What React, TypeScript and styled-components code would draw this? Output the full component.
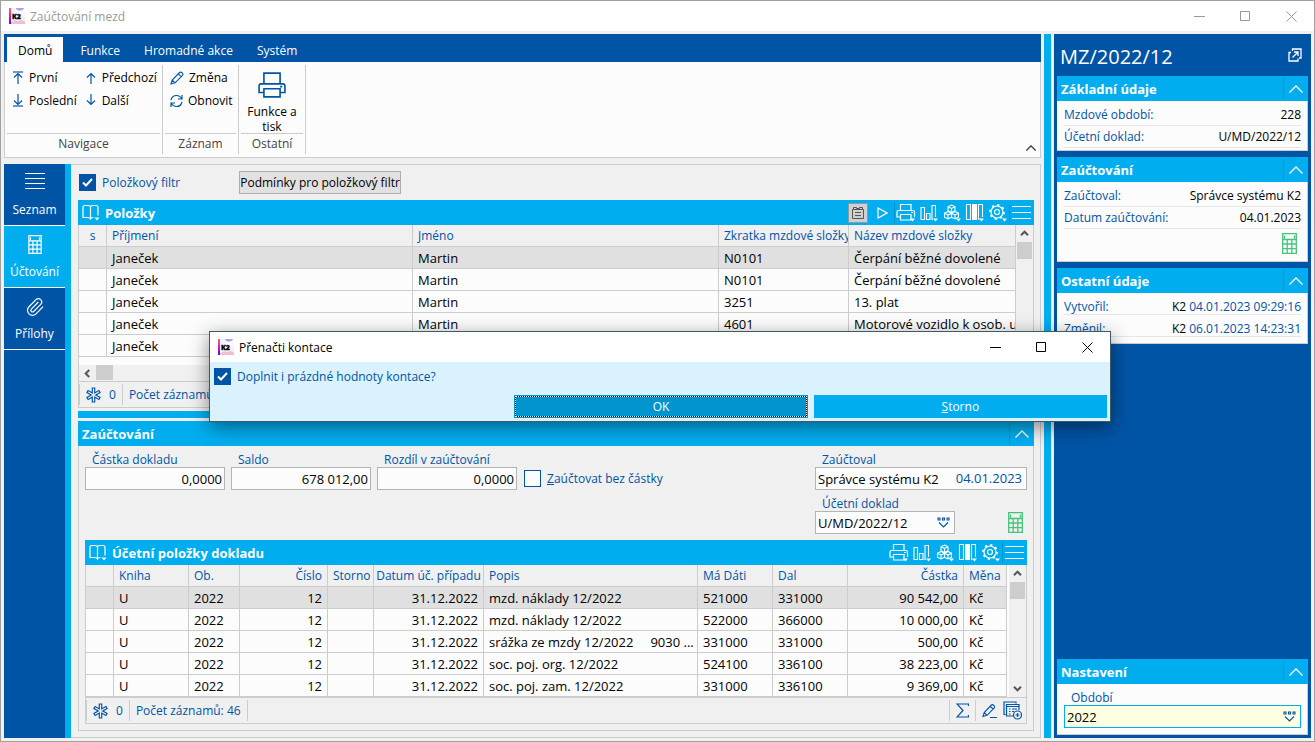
import React, { useState } from "react";
import styled, { createGlobalStyle, css } from "styled-components";

const c = {
  blue: "#0054a6",
  cyan: "#00aeef",
  cyanDark: "#0095cc",
  face: "#f0f0f0",
  paper: "#fcfcfc",
  line: "#cccccc",
  soft: "#d9f2fe",
  green: "#46c37b",
};

const Global = createGlobalStyle`
  *, *::before, *::after { box-sizing: border-box; }
  html, body { margin: 0; }
  body, button, input, select, table {
    font-family: "Open Sans", "Noto Sans", sans-serif;
    font-size: 12px;
    line-height: 15px;
  }
  body { background: ${c.face}; color: #000; }
  button { border: 0; padding: 0; background: none; color: inherit; cursor: default; }
`;

/* ---------- icons ---------- */

const Svg = styled.svg`
  display: block;
  flex: none;
  fill: none;
  stroke: currentColor;
`;

type Size = { w?: number; h?: number };

const Logo = () => (
  <Svg width="16" height="16" viewBox="0 0 16 16" stroke="none" aria-hidden="true">
    <defs>
      <linearGradient id="bar" x1="0" y1="0" x2="0" y2="1">
        <stop offset="0" stopColor="#ff6a5a" />
        <stop offset="0.5" stopColor="#d61ad0" />
        <stop offset="1" stopColor="#4a12e8" />
      </linearGradient>
      <linearGradient id="sky" x1="0" y1="0" x2="1" y2="1">
        <stop offset="0" stopColor="#f3e6fb" />
        <stop offset="0.5" stopColor="#ffffff" />
        <stop offset="1" stopColor="#f4dff0" />
      </linearGradient>
    </defs>
    <rect width="16" height="16" fill="url(#sky)" stroke="none" />
    <path d="M7 0h8l-1 2-4 .8L7 1z" fill="#8d7be8" stroke="none" opacity="0.7" />
    <path d="M2 14l4-2 3 1 4-1 3 2v2H2z" fill="#f0a8c0" stroke="none" opacity="0.7" />
    <rect width="2" height="16" fill="url(#bar)" stroke="none" />
    <text x="3" y="11" fontSize="7" fontWeight="800" fill="#000" stroke="#000" strokeWidth="0.3" fontFamily="Open Sans, sans-serif">K2</text>
  </Svg>
);

const Check = () => (
  <Svg width="11" height="9" viewBox="0 0 11 9" strokeWidth="2" aria-hidden="true">
    <path d="M1 4.5l3 3 6-6.5" />
  </Svg>
);

const ArrowIcon = ({ down, bar }: { down?: boolean; bar?: boolean }) => (
  <Svg width="12" height="13" viewBox="0 0 12 13" strokeWidth="1.2" aria-hidden="true">
    <g transform={down ? "rotate(180 6 6.5)" : undefined}>
      <path d="M6 13V2.5M2 6.5l4-4 4 4" />
      {bar && <path d="M1 1h10" />}
    </g>
  </Svg>
);

const Pencil = () => (
  <Svg width="14" height="14" viewBox="0 0 14 14" strokeWidth="1.1" aria-hidden="true">
    <path d="M1 13l1.200-4L9.600 1.500q1.100-.9 2.500.4t.4 2.500L5 11.800zM8.300 2.800l2.900 2.900M2.200 9l2.800 2.800" />
  </Svg>
);

const Refresh = () => (
  <Svg width="13" height="14" viewBox="0 0 13 14" strokeWidth="1.2" aria-hidden="true">
    <path d="M1 6Q2 1.500 6.500 1.500 10 1.500 11.800 5M12 1v4H8M12 8Q11 12.500 6.500 12.500 3 12.500 1.200 9M1 13V9h4" />
  </Svg>
);

const Printer = ({ w = 28, h = 26 }: Size) => (
  <Svg width={w} height={h} viewBox="0 0 26 24" strokeWidth="1.5" aria-hidden="true">
    <path d="M5.500 11V1h15v10M5.500 19H1V13q0-2 2-2h20q2 0 2 2v6h-4.500M5.500 15.500h15V23h-15zM20.500 13.500h2" />
  </Svg>
);

const Chevron = ({ w = 14, h = 8, weight = 1.3 }: Size & { weight?: number }) => (
  <Svg width={w} height={h} viewBox="0 0 14 8" strokeWidth={weight} aria-hidden="true">
    <path d="M0.500 7.500L7 1l6.500 6.500" />
  </Svg>
);

const Lines = () => (
  <Svg width="20" height="17" viewBox="0 0 20 17" aria-hidden="true">
    <path d="M0 .5h20M0 5.500h20M0 10.500h20M0 15.500h20" />
  </Svg>
);

const Calc = ({ w = 15, h = 21 }: Size) => (
  <Svg width={w} height={h} viewBox="0 0 15 21" strokeWidth="1.3" aria-hidden="true">
    <path d="M.7.7h13.600v19.600H.7zM2.500 2.500v3M12.500 2.500v3M.7 6.500h13.600M.7 11h13.600M.7 15.600h13.600M5.200 6.500v14M9.800 6.500v14" />
  </Svg>
);

const Clip = () => (
  <Svg width="20" height="20" viewBox="0 0 24 24" strokeWidth="1.4" aria-hidden="true">
    <path d="m16 6-8.414 8.586a2 2 0 0 0 2.829 2.829l8.414-8.586a4 4 0 1 0-5.657-5.657l-8.379 8.551a6 6 0 1 0 8.485 8.485l8.379-8.551" />
  </Svg>
);

const Book = () => (
  <Svg width="18" height="17" viewBox="0 0 18 17" strokeWidth="1.2" aria-hidden="true">
    <path d="M8.500 2.500Q7.500 1.500 5.500 1.500H3Q1 1.500 1 3.500V13.500H5.500q2 0 3 1.500Q9.500 13.500 11.500 13.500M8.500 2.500Q9.500 1.500 11.500 1.500H14q2 0 2 2V11.500M8.500 2.500v12.500" />
    <path d="M12.500 13.500h5L15 16.500z" fill="currentColor" stroke="none" />
  </Svg>
);

const BoxIcon = () => (
  <Svg width="12" height="13" viewBox="0 0 12 13" aria-hidden="true">
    <path d="M.5 3.500v9h11v-9zM1.500 3.500v-2h3v1h3v-1h3v2" />
    <path d="M3 6.500h6M3 9.500h6" />
  </Svg>
);

const Play = () => (
  <Svg width="11" height="12" viewBox="0 0 11 12" strokeWidth="1.2" aria-hidden="true">
    <path d="M1 1l9 5-9 5z" />
  </Svg>
);

const Drop = () => <path d="M14 15.500h5l-2.500 3z" fill="currentColor" stroke="none" />;

const PrintTool = () => (
  <Svg width="20" height="19" viewBox="0 0 20 19" strokeWidth="1.2" aria-hidden="true">
    <path d="M4.500 7.500v-6h10.500v6M4.500 14H1V9q0-1.500 1.500-1.500h14.500q1.500 0 1.500 1.500v5M4.500 11.500H15v5.500H4.500zM15 9.500h2" />
    <Drop />
  </Svg>
);

const ChartTool = () => (
  <Svg width="20" height="19" viewBox="0 0 20 19" strokeWidth="1.1" aria-hidden="true">
    <path d="M2 4.500h3.500v12H2zM7.500 10.500H11v6H7.500zM16.500 14V2.500H13v14h1" />
    <Drop />
  </Svg>
);

const CubesTool = () => (
  <Svg width="20" height="19" viewBox="0 0 20 19" strokeWidth="1.1" aria-hidden="true">
    <path d="M9.500 2l3.500 1.800v4L9.500 9.500 6 7.800v-4zM6 3.800l3.500 1.700L13 3.800M9.500 5.500v4M6 8.500l3.500 1.700v4L6 16l-3.500-1.800v-4zM2.500 10.200L6 12l3.500-1.800L13 8.500l3.500 1.700v4L13 16l-3.500-1.800M6 12v4M9.500 10.200L13 12l3.500-1.800M13 12v4" />
    <Drop />
  </Svg>
);

const ColumnsTool = () => (
  <Svg width="20" height="19" viewBox="0 0 20 19" strokeWidth="1.1" aria-hidden="true">
    <path d="M1.500 1.500h4v15h-4zM13.500 16.500v-15h4v12.500M13.500 16.500h1" />
    <path d="M7 1h5v16H7z" fill="currentColor" stroke="none" />
    <Drop />
  </Svg>
);

const GearTool = () => (
  <Svg width="20" height="19" viewBox="0 0 20 19" strokeWidth="1.200" aria-hidden="true">
    <circle cx="9" cy="9" r="6" />
    <circle cx="9" cy="9" r="2.500" />
    <circle cx="9" cy="9" r="7" strokeWidth="1.800" strokeDasharray="2.200 3.298" />
    <Drop />
  </Svg>
);

const MenuTool = () => (
  <Svg width="19" height="13" viewBox="0 0 19 13" aria-hidden="true">
    <path d="M0 .5h19M0 6.500h19M0 12.500h19" />
  </Svg>
);

const Asterisk = () => (
  <Svg width="15" height="16" viewBox="0 0 15 16" aria-hidden="true">
    <path d="M7.500 .5v15M1 4.200l13 7.600M14 4.200L1 11.800" strokeWidth="3.600" />
    <path d="M7.500 1.500v13M2 4.800l11 6.400M13 4.800L2 11.200" strokeWidth="1.300" stroke={c.face} />
  </Svg>
);

const Sigma = () => (
  <Svg width="13" height="15" viewBox="0 0 13 15" strokeWidth="1.200" aria-hidden="true">
    <path d="M12.500 3V1H1l6 6.500L1 14h11.500v-2" />
  </Svg>
);

const EditLine = () => (
  <Svg width="15" height="16" viewBox="0 0 15 16" strokeWidth="1.100" aria-hidden="true">
    <path d="M1 13.500l1.200-4L9.400 2q1.100-.9 2.500.4t.4 2.500L5 12.300zM8.200 3.200l2.900 2.900M2.200 9.500L5 12.300M8 14.500h7" />
  </Svg>
);

const ListAdd = () => (
  <Svg width="19" height="19" viewBox="0 0 19 19" strokeWidth="1.200" aria-hidden="true">
    <path d="M2.500 13.500H1V1h12v1.500M10 15H3.500V3.500H16V9M3.500 5.500H16M6 8h1.500M9 8h5M6 10.500h1.500M9 10.500h2M6 13h1.500" />
    <circle cx="14.500" cy="14" r="4" />
    <path d="M12.500 14h4M14.500 12v4" />
  </Svg>
);

const Picker = () => (
  <Svg width="13" height="11" viewBox="0 0 13 11" strokeWidth="1.100" aria-hidden="true">
    <path d="M1 1h2v2H1zM5.500 1h2v2h-2zM10 1h2v2h-2zM2 5.500l4.500 4.500L11 5.500" />
  </Svg>
);

const External = () => (
  <Svg width="14" height="14" viewBox="0 0 14 14" strokeWidth="1.300" aria-hidden="true">
    <path d="M4.500 3V1H13v9h-2M3 4.500H1V13h9v-2.500M4.500 9.500L10 4M6 4h4v4" />
  </Svg>
);

const ScrollArrow = ({ turn = 0 }: { turn?: number }) => (
  <Svg width="9" height="9" viewBox="0 0 9 9" strokeWidth="2" aria-hidden="true">
    <path d="M1 6.200l3.500-3.500L8 6.200" transform={`rotate(${turn} 4.500 4.500)`} />
  </Svg>
);

const WinGlyph = ({ kind }: { kind: "min" | "max" | "close" }) => (
  <Svg width="11" height="11" viewBox="0 0 11 11" aria-hidden="true">
    {kind === "min" && <path d="M0 5.500h11" />}
    {kind === "max" && <path d="M.5.5h9v9h-9z" />}
    {kind === "close" && <path d="M.5.5l10 10M10.500.5l-10 10" />}
  </Svg>
);

/* ---------- window frame ---------- */

const Window = styled.div`
  position: relative;
  display: flex;
  flex-direction: column;
  min-height: 100vh;
  border: 1px solid #a0a0a0;
  background: ${c.face};
`;

const TitleBar = styled.header<{ $active?: boolean }>`
  display: flex;
  align-items: center;
  gap: 5px;
  height: 30px;
  padding-left: 8px;
  background: #fff;
  color: ${(p) => (p.$active ? "#000" : "#999")};
`;

const TitleText = styled.h1`
  flex: 1;
  margin: 0;
  font-size: 12px;
  font-weight: 400;
`;

const WinButtons = styled.div`
  display: flex;
  align-self: stretch;
`;

const WinButton = styled.button`
  display: grid;
  place-items: center;
  width: 46px;
`;

const Body = styled.div`
  flex: 1;
  display: grid;
  grid-template-columns: minmax(0, 1fr) 7px 257px;
  gap: 3px;
  padding: 3px;
`;

const VSplitter = styled.div`
  background: ${c.cyan};
`;

const Left = styled.div`
  display: flex;
  flex-direction: column;
  min-width: 0;
`;

/* ---------- ribbon ---------- */

const Tabs = styled.nav`
  display: flex;
  height: 28px;
  padding: 3px 3px 0;
  background: ${c.blue};
`;

const Tab = styled.button<{ $active?: boolean }>`
  padding: 1px ${(p) => (p.$active ? 11 : 12)}px 0;
  margin-right: ${(p) => (p.$active ? 5 : 0)}px;
  color: ${(p) => (p.$active ? "#000" : "#fff")};
  background: ${(p) => (p.$active ? c.paper : "transparent")};
`;

const Ribbon = styled.section`
  display: flex;
  height: 96px;
  padding: 3px 3px 3px 2px;
  margin-bottom: 6px;
  background: ${c.paper};
  border: 1px solid ${c.line};
  border-width: 0 1px 1px 1px;
`;

const Group = styled.div<{ $width: number }>`
  display: flex;
  flex-direction: column;
  width: ${(p) => p.$width}px;
  padding-right: 2px;
  margin-right: 2px;
  border-right: 1px solid ${c.line};
`;

const GroupBody = styled.div`
  flex: 1;
  display: grid;
  grid-auto-flow: column;
  grid-template-rows: 23px 23px;
  justify-content: start;
  column-gap: 8px;
  padding: 1px 5px 0;
  border-bottom: 1px solid ${c.line};
`;

const GroupLabel = styled.div`
  height: 20px;
  line-height: 20px;
  text-align: center;
  color: #444;
`;

const Command = styled.button`
  display: flex;
  align-items: center;
  gap: 5px;
  svg { color: ${c.blue}; }
`;

const BigCommand = styled.button`
  grid-row: 1 / 3;
  display: flex;
  flex-direction: column;
  align-items: center;
  gap: 6px;
  width: 52px;
  height: 68px;
  padding-top: 6px;
  svg { color: ${c.blue}; }
`;

const Collapse = styled.button`
  margin-left: auto;
  align-self: flex-end;
  padding: 3px 1px;
  color: #333;
`;

/* ---------- work area ---------- */

const Work = styled.div`
  flex: 1;
  display: flex;
  min-width: 0;
`;

const Side = styled.nav`
  flex: none;
  width: 67px;
  background: ${c.blue};
  border-right: 6px solid ${c.cyan};
`;

const SideItem = styled.button<{ $active?: boolean }>`
  display: flex;
  flex-direction: column;
  align-items: center;
  justify-content: space-between;
  width: 100%;
  height: 62px;
  padding: 9px 0 8px;
  color: #fff;
  background: ${(p) => (p.$active ? c.cyan : c.blue)};
  border-bottom: 1px solid #fff;
`;

const Main = styled.main`
  flex: 1;
  display: flex;
  flex-direction: column;
  min-width: 0;
  padding: 6px 6px 6px 7px;
  border: 1px solid ${c.line};
  border-left: 0;
`;

const FilterRow = styled.div`
  display: flex;
  align-items: center;
  gap: 59px;
  height: 23px;
  padding-left: 1px;
  margin-bottom: 6px;
`;

const TickLabel = styled.label`
  display: inline-flex;
  align-items: center;
  gap: 6px;
  color: ${c.blue};
`;

const TickBox = styled.span`
  display: grid;
  width: 17px;
  height: 17px;
  color: #fff;
  > * { grid-area: 1 / 1; place-self: center; }
  > svg { z-index: 1; pointer-events: none; }
`;

const TickInput = styled.input`
  appearance: none;
  width: 17px;
  height: 17px;
  margin: 0;
  border: 1px solid ${c.blue};
  background: ${c.paper};
  &:checked { background: ${c.blue}; }
`;

const PlainButton = styled.button`
  height: 23px;
  white-space: nowrap;
  background: #e1e1e1;
  border: 1px solid #adadad;
`;

const Bar = styled.div<{ $fold?: boolean }>`
  display: flex;
  align-items: center;
  height: 25px;
  padding: 0 ${(p) => (p.$fold ? 0 : 2)}px 0 4px;
  gap: 5px;
  background: ${c.cyan};
  color: #fff;
`;

const BarTitle = styled.h2`
  flex: 1;
  margin: 0;
  padding-top: 1px;
  font-size: 13px;
  font-weight: 700;
`;

const Tools = styled.div`
  display: flex;
  align-items: center;
`;

const Tool = styled.button<{ $sep?: boolean; $pressed?: boolean }>`
  display: grid;
  place-items: center;
  width: 23px;
  height: 21px;
  ${(p) => p.$sep && css`border-left: 1px solid ${c.cyanDark};`}
  ${(p) =>
    p.$pressed &&
    css`
      width: 20px;
      height: 20px;
      margin-right: 3px;
      background: #d0d0d0;
      border: 1px solid #8c9ba3;
      color: #555;
    `}
`;

const CollapseTool = styled.button`
  display: grid;
  place-items: center;
  width: 25px;
  height: 21px;
  border-left: 1px solid ${c.cyanDark};
`;

const GridArea = styled.div`
  display: flex;
  background: ${c.paper};
  border: 1px solid ${c.line};
  border-width: 0 1px;
`;

const GridClip = styled.div`
  flex: 1;
  min-width: 0;
  overflow: hidden;
`;

const GridFoot = styled.div`
  height: 8px;
  background: ${c.paper};
  border: 1px solid ${c.line};
  border-width: 0 1px;
`;

const Gutter = styled.div`
  width: 2px;
`;

const Table = styled.table`
  width: 100%;
  table-layout: fixed;
  border-collapse: separate;
  border-spacing: 0;
`;

type CellProps = { $align?: "right" | "center" };

const cell = css<CellProps>`
  height: 22px;
  overflow: hidden;
  white-space: nowrap;
  text-align: ${(p) => p.$align ?? "left"};
  border-right: 1px solid ${c.line};
  border-bottom: 1px solid ${c.line};
`;

const thPadding = { right: "0 5px 0 0", center: "0", left: "0 0 0 5px" };

const Th = styled.th<CellProps>`
  ${cell}
  padding: ${(p) => thPadding[p.$align ?? "left"]};
  font-size: 12px;
  font-weight: 400;
  color: ${c.blue};
  background: ${c.face};
`;

const Td = styled.td<CellProps>`
  ${cell}
  padding: 2px 5px 0;
  font-size: 13px;
`;

const Tr = styled.tr<{ $selected?: boolean }>`
  background: ${(p) => (p.$selected ? "#e0e0e0" : c.paper)};
`;

const Tail = styled.span`
  margin-left: 17px;
`;

const VScroll = styled.div`
  display: flex;
  flex-direction: column;
  align-items: center;
  width: 17px;
  background: ${c.face};
  color: #555;
`;

const HScroll = styled.div`
  display: flex;
  height: 16px;
  background: ${c.face};
  border: 1px solid ${c.line};
  border-width: 0 1px;
  color: #555;
`;

const ScrollButton = styled.button`
  display: grid;
  place-items: center;
  width: 17px;
  height: 17px;
`;

const Thumb = styled.div<{ $flat?: boolean }>`
  width: ${(p) => (p.$flat ? 17 : 15)}px;
  height: ${(p) => (p.$flat ? 15 : 17)}px;
  background: #cdcdcd;
`;

const Spacer = styled.div`
  flex: 1;
`;

const Status = styled.div`
  display: flex;
  align-items: center;
  height: 27px;
  border: 1px solid ${c.line};
  color: ${c.blue};
`;

const StatusItem = styled.div<{ $left?: boolean; $right?: boolean; $end?: boolean }>`
  display: flex;
  align-items: center;
  gap: ${(p) => (p.$end ? 6 : 8)}px;
  height: 21px;
  padding: 0 ${(p) => (p.$end ? 4 : 6)}px 0 6px;
  border: 0 solid ${c.line};
  border-left-width: ${(p) => (p.$left ? 1 : 0)}px;
  border-right-width: ${(p) => (p.$right ? 1 : 0)}px;
`;

const IconButton = styled.button`
  display: grid;
  place-items: center;
`;

const HSplitter = styled.div`
  height: 7px;
  margin: 3px 0;
  background: ${c.cyan};
`;

const Posting = styled.section`
  flex: 1;
  padding: 0 6px 6px;
  border: 1px solid ${c.line};
  border-top: 0;
`;

const Form = styled.div`
  display: flex;
  align-items: flex-start;
  gap: 6px;
  padding: 6px 0;
`;

const FormSide = styled.div`
  display: grid;
  grid-template-columns: 140px 72px;
  row-gap: 6px;
  margin-left: auto;
`;

const FieldBox = styled.div<{ $wide?: boolean }>`
  display: flex;
  flex-direction: column;
  width: ${(p) => (p.$wide ? "auto" : "140px")};
  ${(p) => p.$wide && css`grid-column: 1 / 3;`}
`;

const FieldLabel = styled.label`
  padding-left: 7px;
  height: 15px;
  color: ${c.blue};
`;

const fieldLook = css`
  height: 23px;
  background: ${c.paper};
  border: 1px solid #b4b4b4;
  font-size: 13px;
`;

const NumberInput = styled.input`
  ${fieldLook}
  width: 100%;
  padding: 1px 2px 0;
  text-align: right;
`;

const Combo = styled.div<{ $focus?: boolean }>`
  ${fieldLook}
  display: flex;
  align-items: center;
  padding: 0 4px 0 2px;
  color: ${c.blue};
  ${(p) =>
    p.$focus &&
    css`
      background: #ffffe1;
      border-color: ${c.cyan};
    `}
`;

const bare = css`
  flex: 1;
  min-width: 0;
  height: 21px;
  padding: 1px 0 0;
  border: 0;
  outline: 0;
  background: transparent;
  font-size: 13px;
  color: #000;
`;

const BareInput = styled.input`
  ${bare}
`;

const BareSelect = styled.select`
  ${bare}
  appearance: none;
`;

const TickHolder = styled.div`
  padding: 18px 0 0 1px;
`;

const GreenButton = styled.button`
  align-self: end;
  justify-self: end;
  padding: 0 4px 1px 0;
  color: ${c.green};
`;

/* ---------- right panel ---------- */

const Aside = styled.aside`
  display: flex;
  flex-direction: column;
  gap: 6px;
  padding: 0 3px 3px;
  background: ${c.blue};
`;

const AsideTitle = styled.div`
  display: flex;
  align-items: center;
  justify-content: space-between;
  height: 42px;
  margin-bottom: -6px;
  padding: 3px 6px 0 3px;
  font-size: 20px;
  color: #fff;
  svg { margin-bottom: 3px; }
`;

const Card = styled.section<{ $bottom?: boolean }>`
  ${(p) => p.$bottom && css`margin-top: auto;`}
`;

const CardBody = styled.div<{ $pad?: string }>`
  padding: ${(p) => p.$pad ?? "3px 6px 2px 7px"};
  background: ${c.paper};
  border: 1px solid ${c.line};
  border-width: 0 1px 1px 0;
`;

const Info = styled.div<{ $low?: boolean }>`
  display: flex;
  align-items: center;
  justify-content: space-between;
  height: 22px;
  padding-top: ${(p) => (p.$low ? 5 : 0)}px;
  color: ${c.blue};
  border-bottom: 1px solid #e6e6e6;
  b { font-weight: 400; color: #000; }
`;

const CardIcon = styled.div`
  display: flex;
  justify-content: flex-end;
  padding: 4px 0;
`;

/* ---------- dialog ---------- */

const Dialog = styled.div`
  position: absolute;
  top: 330px;
  left: 208px;
  right: 203px;
  border: 1px solid #3c5a68;
  background: ${c.soft};
  box-shadow: 0 5px 18px rgba(0, 0, 0, 0.45);
`;

const DialogBody = styled.div`
  display: flex;
  padding: 6px 4px 0;
`;

const DialogButtons = styled.div`
  display: grid;
  grid-template-columns: 1fr 1fr 1fr;
  gap: 6px;
  padding: 10px 3px 3px 5px;
`;

const DialogButton = styled.button<{ $default?: boolean }>`
  height: 23px;
  color: #fff;
  background: ${c.cyan};
  &:first-child { grid-column: 2; }
  ${(p) =>
    p.$default &&
    css`
      background: #0095cc;
      outline: 1px dotted #fff;
      outline-offset: -2px;
      box-shadow: inset 0 0 0 1px #0095cc, inset 0 0 0 2px #000;
    `}
`;

/* ---------- pieces ---------- */

const Tick = ({ id, on, children }: { id: string; on?: boolean; children: React.ReactNode }) => {
  const [checked, setChecked] = useState(!!on);
  return (
    <TickLabel htmlFor={id}>
      <TickBox>
        <TickInput id={id} type="checkbox" checked={checked} onChange={(e) => setChecked(e.target.checked)} />
        {checked && <Check />}
      </TickBox>
      <span>{children}</span>
    </TickLabel>
  );
};

const Controls = () => (
  <WinButtons>
    <WinButton aria-label="Minimalizovat"><WinGlyph kind="min" /></WinButton>
    <WinButton aria-label="Maximalizovat"><WinGlyph kind="max" /></WinButton>
    <WinButton aria-label="Zavřít"><WinGlyph kind="close" /></WinButton>
  </WinButtons>
);

const GridTools = ({ extra }: { extra?: boolean }) => (
  <Tools>
    {extra && <Tool $pressed aria-label="Karta"><BoxIcon /></Tool>}
    {extra && <Tool aria-label="Spustit"><Play /></Tool>}
    <Tool $sep={extra} aria-label="Tisk"><PrintTool /></Tool>
    <Tool aria-label="Graf"><ChartTool /></Tool>
    <Tool aria-label="Kostky"><CubesTool /></Tool>
    <Tool aria-label="Sloupce"><ColumnsTool /></Tool>
    <Tool aria-label="Možnosti"><GearTool /></Tool>
    <Tool $sep aria-label="Nabídka"><MenuTool /></Tool>
  </Tools>
);

const FoldBar = ({ title }: { title: string }) => (
  <Bar $fold>
    <BarTitle>{title}</BarTitle>
    <CollapseTool aria-label={`Sbalit ${title}`}><Chevron /></CollapseTool>
  </Bar>
);

const people = [
  ["N0101", "Čerpání běžné dovolené"],
  ["N0101", "Čerpání běžné dovolené"],
  ["3251", "13. plat"],
  ["4601", "Motorové vozidlo k osob. užívání"],
  ["4601", "Motorové vozidlo k osob. užívání"],
];

const entries = [
  ["mzd. náklady 12/2022", "", "521000", "331000", "90 542,00"],
  ["mzd. náklady 12/2022", "", "522000", "366000", "10 000,00"],
  ["srážka ze mzdy 12/2022", "9030 ...", "331000", "331000", "500,00"],
  ["soc. poj. org. 12/2022", "", "524100", "336100", "38 223,00"],
  ["soc. poj. zam. 12/2022", "", "331000", "336100", "9 369,00"],
];

const Cols = ({ list }: { list: (number | null)[] }) => (
  <colgroup>
    {list.map((w, i) => (w ? <col key={i} width={w} /> : <col key={i} />))}
  </colgroup>
);

const ItemsGrid = () => (
  <section>
    <Bar>
      <Book />
      <BarTitle>Položky</BarTitle>
      <GridTools extra />
    </Bar>
    <GridArea>
      <GridClip>
        <Table>
          <Cols list={[28, 306, 306, 130, null]} />
          <thead>
            <tr>
              <Th $align="center">s</Th>
              <Th>Příjmení</Th>
              <Th>Jméno</Th>
              <Th>Zkratka mzdové složky</Th>
              <Th>Název mzdové složky</Th>
            </tr>
          </thead>
          <tbody>
            {people.map(([code, name], i) => (
              <Tr key={i} $selected={i === 0}>
                <Td />
                <Td>Janeček</Td>
                <Td>Martin</Td>
                <Td>{code}</Td>
                <Td>{name}</Td>
              </Tr>
            ))}
          </tbody>
        </Table>
      </GridClip>
      <VScroll>
        <ScrollButton aria-label="Nahoru"><ScrollArrow /></ScrollButton>
        <Thumb />
      </VScroll>
    </GridArea>
    <GridFoot />
    <HScroll>
      <ScrollButton aria-label="Doleva"><ScrollArrow turn={-90} /></ScrollButton>
      <Thumb $flat />
    </HScroll>
    <Status>
      <StatusItem $left $right><Asterisk />0</StatusItem>
      <StatusItem>Počet záznamů: 46</StatusItem>
    </Status>
  </section>
);

const EntriesGrid = () => (
  <section>
    <Bar>
      <Book />
      <BarTitle>Účetní položky dokladu</BarTitle>
      <GridTools />
    </Bar>
    <GridArea>
      <GridClip>
        <Table>
          <Cols list={[28, 75, 51, 88, 46, 110, null, 75, 75, 116, 43]} />
          <thead>
            <tr>
              <Th />
              <Th>Kniha</Th>
              <Th>Ob.</Th>
              <Th $align="right">Číslo</Th>
              <Th>Storno</Th>
              <Th $align="center">Datum úč. případu</Th>
              <Th>Popis</Th>
              <Th>Má Dáti</Th>
              <Th>Dal</Th>
              <Th $align="right">Částka</Th>
              <Th>Měna</Th>
            </tr>
          </thead>
          <tbody>
            {entries.map(([text, tail, debit, credit, sum], i) => (
              <Tr key={i} $selected={i === 0}>
                <Td />
                <Td>U</Td>
                <Td>2022</Td>
                <Td $align="right">12</Td>
                <Td />
                <Td $align="right">31.12.2022</Td>
                <Td>{text}{tail && <Tail>{tail}</Tail>}</Td>
                <Td>{debit}</Td>
                <Td>{credit}</Td>
                <Td $align="right">{sum}</Td>
                <Td>Kč</Td>
              </Tr>
            ))}
          </tbody>
        </Table>
      </GridClip>
      <Gutter />
      <VScroll>
        <ScrollButton aria-label="Nahoru"><ScrollArrow /></ScrollButton>
        <Thumb />
        <Spacer />
        <ScrollButton aria-label="Dolů"><ScrollArrow turn={180} /></ScrollButton>
      </VScroll>
    </GridArea>
    <Status>
      <StatusItem $left $right><Asterisk />0</StatusItem>
      <StatusItem $right>Počet záznamů: 46</StatusItem>
      <Spacer />
      <StatusItem $left $right><IconButton aria-label="Součet"><Sigma /></IconButton></StatusItem>
      <StatusItem $end>
        <IconButton aria-label="Upravit"><EditLine /></IconButton>
        <IconButton aria-label="Přidat"><ListAdd /></IconButton>
      </StatusItem>
    </Status>
  </section>
);

const amounts = [
  ["castka", "Částka dokladu", "0,0000"],
  ["saldo", "Saldo", "678 012,00"],
  ["rozdil", "Rozdíl v zaúčtování", "0,0000"],
];

export default function App() {
  return (
    <>
      <Global />
      <Window>
        <TitleBar>
          <Logo />
          <TitleText>Zaúčtování mezd</TitleText>
          <Controls />
        </TitleBar>
        <Body>
          <Left>
            <Tabs>
              <Tab $active>Domů</Tab>
              <Tab>Funkce</Tab>
              <Tab>Hromadné akce</Tab>
              <Tab>Systém</Tab>
            </Tabs>
            <Ribbon>
              <Group $width={156}>
                <GroupBody>
                  <Command><ArrowIcon bar />První</Command>
                  <Command><ArrowIcon down bar />Poslední</Command>
                  <Command><ArrowIcon />Předchozí</Command>
                  <Command><ArrowIcon down />Další</Command>
                </GroupBody>
                <GroupLabel>Navigace</GroupLabel>
              </Group>
              <Group $width={74}>
                <GroupBody>
                  <Command><Pencil />Změna</Command>
                  <Command><Refresh />Obnovit</Command>
                </GroupBody>
                <GroupLabel>Záznam</GroupLabel>
              </Group>
              <Group $width={65}>
                <GroupBody>
                  <BigCommand><Printer />Funkce a tisk</BigCommand>
                </GroupBody>
                <GroupLabel>Ostatní</GroupLabel>
              </Group>
              <Collapse aria-label="Sbalit pás"><Chevron w={10} h={6} weight={1.8} /></Collapse>
            </Ribbon>
            <Work>
              <Side>
                <SideItem><Lines />Seznam</SideItem>
                <SideItem $active><Calc w={14} h={19} />Účtování</SideItem>
                <SideItem><Clip />Přílohy</SideItem>
              </Side>
              <Main>
                <FilterRow>
                  <Tick id="filtr" on>Položkový filtr</Tick>
                  <PlainButton>Podmínky pro položkový filtr</PlainButton>
                </FilterRow>
                <ItemsGrid />
                <HSplitter />
                <FoldBar title="Zaúčtování" />
                <Posting>
                  <Form>
                    {amounts.map(([id, label, value]) => (
                      <FieldBox key={id}>
                        <FieldLabel htmlFor={id}>{label}</FieldLabel>
                        <NumberInput id={id} defaultValue={value} />
                      </FieldBox>
                    ))}
                    <TickHolder>
                      <Tick id="bez"><u>Z</u>aúčtovat bez částky</Tick>
                    </TickHolder>
                    <FormSide>
                      <FieldBox $wide>
                        <FieldLabel htmlFor="zauctoval">Zaúčtoval</FieldLabel>
                        <Combo>
                          <BareInput id="zauctoval" defaultValue="Správce systému K2" />
                          04.01.2023
                        </Combo>
                      </FieldBox>
                      <FieldBox>
                        <FieldLabel htmlFor="doklad">Účetní doklad</FieldLabel>
                        <Combo>
                          <BareSelect id="doklad"><option>U/MD/2022/12</option></BareSelect>
                          <Picker />
                        </Combo>
                      </FieldBox>
                      <GreenButton aria-label="Zaúčtovat"><Calc /></GreenButton>
                    </FormSide>
                  </Form>
                  <EntriesGrid />
                </Posting>
              </Main>
            </Work>
          </Left>
          <VSplitter />
          <Aside>
            <AsideTitle>
              MZ/2022/12
              <IconButton aria-label="Otevřít v okně"><External /></IconButton>
            </AsideTitle>
            <Card>
              <FoldBar title="Základní údaje" />
              <CardBody>
                <Info>Mzdové období:<b>228</b></Info>
                <Info>Účetní doklad:<b>U/MD/2022/12</b></Info>
              </CardBody>
            </Card>
            <Card>
              <FoldBar title="Zaúčtování" />
              <CardBody>
                <Info>Zaúčtoval:<b>Správce systému K2</b></Info>
                <Info>Datum zaúčtování:<b>04.01.2023</b></Info>
                <CardIcon><GreenButton aria-label="Účtování"><Calc /></GreenButton></CardIcon>
              </CardBody>
            </Card>
            <Card>
              <FoldBar title="Ostatní údaje" />
              <CardBody $pad="0 6px 6px 7px">
                <Info $low>Vytvořil:<span><b>K2</b> 04.01.2023 09:29:16</span></Info>
                <Info $low>Změnil:<span><b>K2</b> 06.01.2023 14:23:31</span></Info>
              </CardBody>
            </Card>
            <Card $bottom>
              <FoldBar title="Nastavení" />
              <CardBody $pad="6px 6px 6px 7px">
                <FieldLabel htmlFor="obdobi">Období</FieldLabel>
                <Combo $focus>
                  <BareSelect id="obdobi"><option>2022</option></BareSelect>
                  <Picker />
                </Combo>
              </CardBody>
            </Card>
          </Aside>
        </Body>
        <Dialog role="dialog" aria-label="Přenačti kontace">
          <TitleBar $active>
            <Logo />
            <TitleText as="h2">Přenačti kontace</TitleText>
            <Controls />
          </TitleBar>
          <DialogBody>
            <Tick id="doplnit" on>Doplnit i prázdné hodnoty kontace?</Tick>
          </DialogBody>
          <DialogButtons>
            <DialogButton $default>OK</DialogButton>
            <DialogButton><span><u>S</u>torno</span></DialogButton>
          </DialogButtons>
        </Dialog>
      </Window>
    </>
  );
}
